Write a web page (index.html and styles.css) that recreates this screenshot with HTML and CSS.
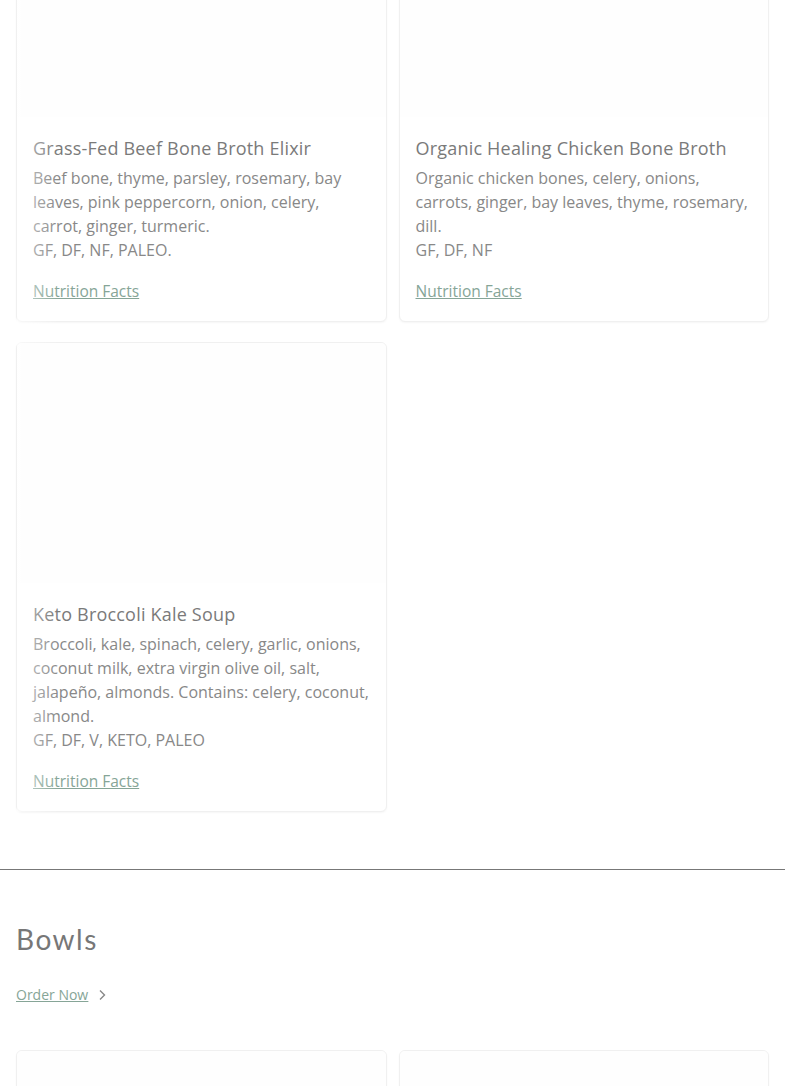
FILE: index.html
```html
<!DOCTYPE html>
<html lang="en">
<head>
  <meta charset="UTF-8" />
  <title>Menu</title>
  <link rel="stylesheet" href="styles.css">
</head>
<body>
  <section class="menu-section broths">
    <div class="card-grid">
      <div class="card">
        <div class="card-image"></div>
        <div class="card-body">
          <h3 class="card-title">Grass-Fed Beef Bone Broth Elixir</h3>
          <p class="card-desc">Beef bone, thyme, parsley, rosemary, bay leaves, pink peppercorn, onion, celery, carrot, ginger, turmeric.</p>
          <p class="card-tags">GF, DF, NF, PALEO.</p>
          <a href="#" class="card-link">Nutrition Facts</a>
        </div>
      </div>

      <div class="card">
        <div class="card-image"></div>
        <div class="card-body">
          <h3 class="card-title">Organic Healing Chicken Bone Broth</h3>
          <p class="card-desc">Organic chicken bones, celery, onions, carrots, ginger, bay leaves, thyme, rosemary, dill.</p>
          <p class="card-tags">GF, DF, NF</p>
          <a href="#" class="card-link">Nutrition Facts</a>
        </div>
      </div>

      <div class="card">
        <div class="card-image"></div>
        <div class="card-body">
          <h3 class="card-title">Keto Broccoli Kale Soup</h3>
          <p class="card-desc">Broccoli, kale, spinach, celery, garlic, onions, coconut milk, extra virgin olive oil, salt, jalapeño, almonds. Contains: celery, coconut, almond.</p>
          <p class="card-tags">GF, DF, V, KETO, PALEO</p>
          <a href="#" class="card-link">Nutrition Facts</a>
        </div>
      </div>
    </div>
  </section>

  <hr class="divider" />

  <section class="menu-section bowls">
    <h2 class="section-title">Bowls</h2>
    <a href="#" class="order-link">
      <span>Order Now</span>
      <svg width="8" height="12" viewBox="0 0 8 12" fill="none" stroke="#888" stroke-width="1.4">
        <path d="M2 1.5l4.5 4.5L2 10.5" />
      </svg>
    </a>
    <div class="card-grid">
      <div class="card"><div class="card-image"></div></div>
      <div class="card"><div class="card-image"></div></div>
    </div>
  </section>
</body>
</html>
```

FILE: styles.css
```css
body {
  margin: 0;
  font-family: 'Open Sans', Lato, sans-serif;
  color: #7a7a7a;
  background: #fff;
  overflow: hidden;
}
.menu-section {
  padding: 0 16px;
}
.broths {
  margin-top: -124px;
  position: relative;
}
.broths::after {
  content: '';
  position: absolute;
  top: 0;
  bottom: 0;
  left: 17px;
  width: 42px;
  background: linear-gradient(to right, rgba(255,255,255,0.55), rgba(255,255,255,0));
  pointer-events: none;
}
.card-grid {
  display: grid;
  grid-template-columns: 1fr 1fr;
  gap: 20px 12px;
}
.card {
  border: 1px solid #f0f0f0;
  border-radius: 6px;
  box-shadow: 0 1px 2px rgba(0, 0, 0, 0.04);
  background: #fff;
  overflow: hidden;
}
.card-image {
  height: 240px;
  background: #fefefe;
}
.card-body {
  padding: 17px 16px 18px;
}
.card-title {
  margin: 0 0 4px;
  font-size: 18px;
  font-weight: 400;
  letter-spacing: 0.2px;
  line-height: 28px;
  color: #7a7a7a;
}
.card-desc, .card-tags {
  margin: 0;
  font-size: 16px;
  font-weight: 400;
  line-height: 24px;
  color: #888;
}
.card-link {
  display: inline-block;
  margin-top: 17px;
  font-size: 15.5px;
  font-weight: 400;
  line-height: 24px;
  color: #86a597;
  text-decoration: underline;
}
.divider {
  margin: 57px 0 0;
  border: none;
  border-top: 1px solid #777;
}
.bowls {
  padding-top: 51px;
}
.section-title {
  margin: 0;
  font-family: Lato, sans-serif;
  font-size: 28px;
  font-weight: 400;
  letter-spacing: 1.5px;
  line-height: 36px;
  color: #777;
}
.order-link {
  display: inline-flex;
  align-items: center;
  gap: 10px;
  margin: 28px 0 46px;
  font-size: 14px;
  color: #86a597;
}
.order-link span {
  text-decoration: underline;
}
```
